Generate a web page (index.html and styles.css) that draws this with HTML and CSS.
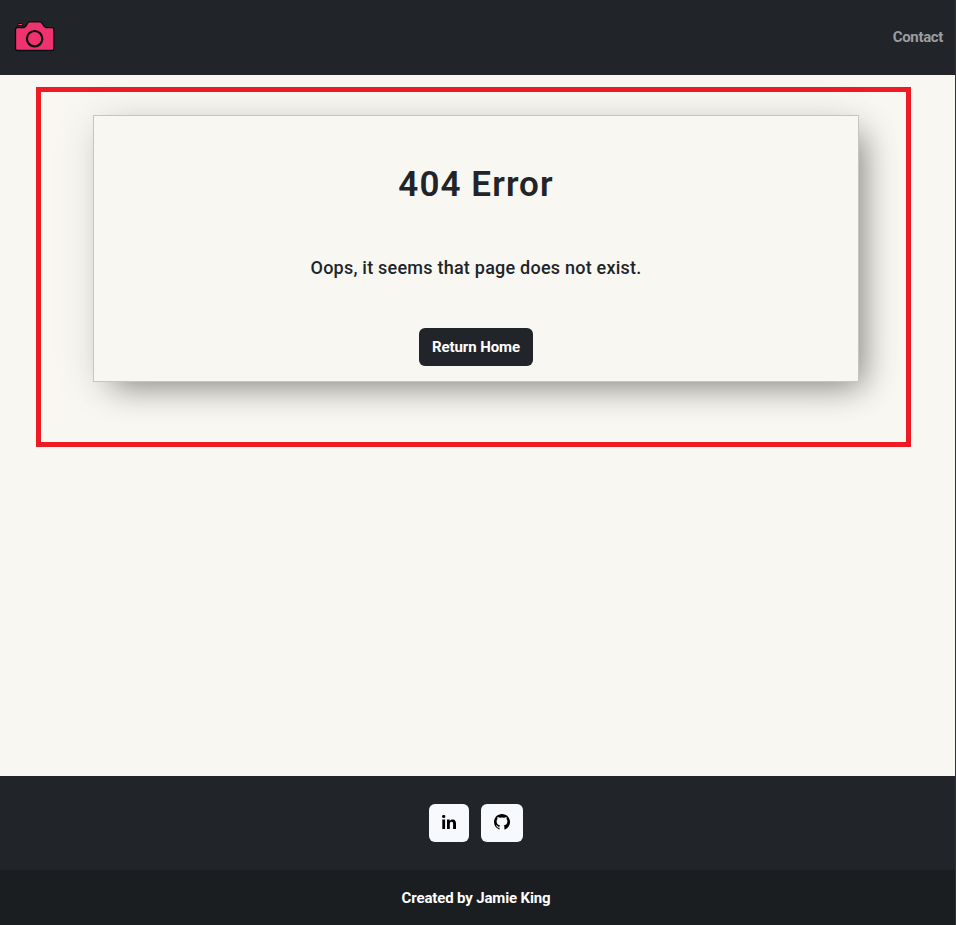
FILE: index.html
```html
<!DOCTYPE html>
<html lang="en">
<head>
<meta charset="utf-8">
<title>404 Error</title>
<link rel="stylesheet" href="styles.css">
</head>
<body>
<header class="navbar">
  <a class="brand" href="#" aria-label="Home">
    <svg width="42" height="34" viewBox="0 0 42 34">
      <path d="M3.700 5.500V4.800Q3.700 3.500 5 3.500H7.600Q8.900 3.500 8.900 4.800V5.500Z" fill="#f0326e" stroke="#090c0e" stroke-width="1"/>
      <path d="M3.500 7.500H10.200C12.200 7.500 13.300 1.800 15.200 1.800H26.400C28.600 1.800 29.500 7.600 31.800 7.600H38Q39.800 7.600 39.800 9.600V28.500Q39.800 30.500 38 30.500H3.500Q1.500 30.500 1.500 28.500V9.500Q1.500 7.500 3.500 7.500Z" fill="#f0326e" stroke="#090c0e" stroke-width="1.3"/>
      <circle cx="20.600" cy="18.700" r="7.700" fill="none" stroke="#090c0e" stroke-width="2.200"/>
    </svg>
  </a>
  <a class="nav-link" href="#">Contact</a>
</header>
<main>
  <section class="frame">
    <div class="card">
      <h1>404 Error</h1>
      <p>Oops, it seems that page does not exist.</p>
      <a class="button" href="#">Return Home</a>
    </div>
  </section>
</main>
<footer>
  <nav class="social">
    <a class="linkedin" href="#" aria-label="LinkedIn">
      <svg width="14" height="14" viewBox="0 0 14 14"><circle cx="1.7" cy="1.5" r="1.6"/><path d="M.3 4.6h2.8V14H.3zM5 4.6h2.7v1.3C8.200 5 9.200 4.400 10.500 4.400 13.300 4.400 14 6.200 14 8.700V14h-2.900V9.300C11.100 8 11 6.700 9.500 6.700S7.800 7.900 7.800 9.200V14H5z"/></svg>
    </a>
    <a class="github" href="#" aria-label="GitHub">
      <svg width="16" height="16" viewBox="0 0 16 16"><path d="M8 0C3.580 0 0 3.580 0 8C0 11.300 1.900 14 4.900 15.300L5.500 15.400V13.700C3.500 14.100 3 12.900 2.700 12.300C2.400 11.800 2 11.500 1.800 11.200C2.800 10.900 3.300 11.700 3.700 12.200C4.200 13 5 12.900 5.600 12.600Q5.700 11.800 6.200 11.400C4.100 11.100 2.600 10 2.600 7.300C2.600 6.400 2.900 5.600 3.500 5Q3.100 4 3.500 2.900Q4.400 2.800 5.700 3.700Q8 3.100 10.300 3.700Q11.600 2.800 12.500 2.900Q12.900 4 12.500 5C13.100 5.600 13.400 6.400 13.400 7.300C13.400 10 11.800 11.100 9.700 11.400Q10.400 11.900 10.400 13V15.500L11 15.400C14 14.100 16 11.300 16 8C16 3.580 12.420 0 8 0Z"/></svg>
    </a>
  </nav>
  <div class="credit"><span>Created by Jamie King</span></div>
</footer>
</body>
</html>
```

FILE: styles.css
```css
* { box-sizing: border-box; }
body {
  margin: 0;
  height: 925px;
  display: flex;
  flex-direction: column;
  border-right: 1px solid #303234;
  background: #f8f7f1;
  color: #212529;
  font-family: Roboto, "Liberation Sans", sans-serif;
  font-weight: 500;
}
a { color: inherit; text-decoration: none; }
.navbar {
  height: 75px;
  display: flex;
  align-items: center;
  justify-content: space-between;
  padding: 0 12px 0 14px;
  background: #212529;
}
.brand svg { display: block; margin-bottom: 1px; }
.nav-link { color: #9b9d9f; font-size: 15px; font-weight: 700; letter-spacing: -.35px; padding-bottom: 2px; }
main { flex: 1; padding: 12px 44px 0 36px; }
.frame { height: 360px; border: 5px solid #ed1c24; padding: 23px 47px 0 52px; }
.card {
  height: 267px;
  display: flex;
  flex-direction: column;
  align-items: center;
  border: 1px solid #c6c6c0;
  background: #f8f7f1;
  box-shadow: 12px 12px 30px -8px rgba(0, 0, 0, .42), 0 4px 44px rgba(0, 0, 0, .09);
}
h1 { margin: 48px 0 0; font-size: 35px; line-height: 42px; font-weight: 600; letter-spacing: 1.1px; }
p { margin: 48px 0 0; font-size: 18px; line-height: 28px; letter-spacing: .23px; }
.button {
  width: 114px;
  height: 38px;
  margin-top: 46px;
  border-radius: 6px;
  background: #212529;
  color: #fff;
  text-align: center;
  font-size: 15px;
  font-weight: 700;
  line-height: 38px;
  letter-spacing: -.1px;
}
footer { background: #212529; }
.social { height: 94px; padding: 28px 0 0 429px; display: flex; gap: 12px; }
.social a {
  height: 38px;
  width: 40px;
  display: flex;
  align-items: center;
  justify-content: center;
  border-radius: 6px;
  background: #f8f9fc;
  padding-bottom: 2px;
}
.social .github { width: 42px; }
.credit {
  height: 55px;
  padding: 1px 3px 0 0;
  text-align: center;
  line-height: 55px;
  background: #1a1e21;
  color: #fff;
  font-size: 15px;
  font-weight: 700;
  letter-spacing: -.15px;
}
```
